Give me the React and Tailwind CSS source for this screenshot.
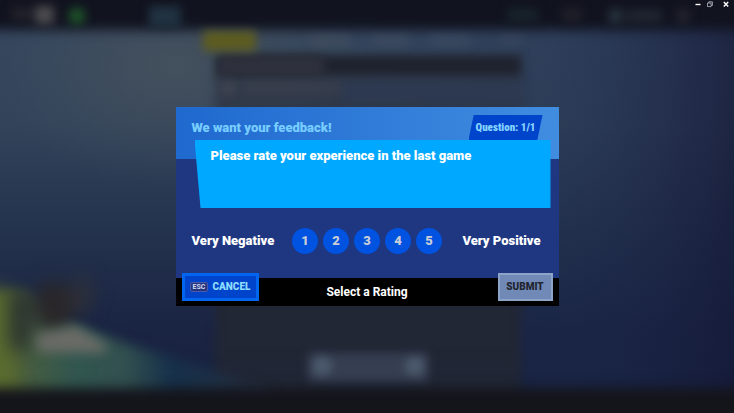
import { useState } from "react";

const RATINGS = [1, 2, 3, 4, 5];

function LobbyScene() {
  return (
    <svg
      aria-hidden="true"
      viewBox="0 0 734 413"
      preserveAspectRatio="none"
      className="absolute inset-0 -z-10 h-full w-full"
    >
      <defs>
        <linearGradient id="sky" x1="0" y1="0" x2="0" y2="1">
          <stop offset="0" stopColor="#35475f" />
          <stop offset="0.3" stopColor="#32435a" />
          <stop offset="0.6" stopColor="#22304b" />
          <stop offset="0.8" stopColor="#1a2443" />
          <stop offset="1" stopColor="#18223f" />
        </linearGradient>
        <linearGradient id="night" x1="0" y1="0" x2="1" y2="0">
          <stop offset="0.5" stopColor="#1a2650" stopOpacity="0" />
          <stop offset="0.75" stopColor="#1c2a50" stopOpacity="0.25" />
          <stop offset="1" stopColor="#151838" stopOpacity="0.7" />
        </linearGradient>
        <radialGradient id="glow" cx="0.5" cy="0.5" r="0.5">
          <stop offset="0" stopColor="#46525d" stopOpacity="0.85" />
          <stop offset="1" stopColor="#46525d" stopOpacity="0" />
        </radialGradient>
        <linearGradient id="list" x1="0" y1="0" x2="0" y2="1">
          <stop offset="0" stopColor="#313847" stopOpacity="0.6" />
          <stop offset="0.5" stopColor="#222733" />
          <stop offset="1" stopColor="#212636" />
        </linearGradient>
        <linearGradient id="hill" gradientUnits="userSpaceOnUse" x1="0" y1="0" x2="260" y2="0">
          <stop offset="0" stopColor="#52622f" />
          <stop offset="0.12" stopColor="#455c41" />
          <stop offset="0.28" stopColor="#31564f" />
          <stop offset="0.48" stopColor="#32504f" />
          <stop offset="0.66" stopColor="#16304b" />
          <stop offset="1" stopColor="#252f40" />
        </linearGradient>
        <filter id="haze" x="-60%" y="-60%" width="220%" height="220%" colorInterpolationFilters="sRGB">
          <feGaussianBlur stdDeviation="9" />
        </filter>
        <filter id="soft" x="-60%" y="-60%" width="220%" height="220%" colorInterpolationFilters="sRGB">
          <feGaussianBlur stdDeviation="6" />
        </filter>
        <filter id="edge" x="-60%" y="-100%" width="220%" height="300%" colorInterpolationFilters="sRGB">
          <feGaussianBlur stdDeviation="5" />
        </filter>
      </defs>

      <rect width="734" height="413" fill="url(#sky)" />
      <ellipse cx="175" cy="65" rx="190" ry="120" fill="url(#glow)" />
      <rect width="734" height="413" fill="url(#night)" />

      <rect x="215" y="55" width="306" height="345" fill="url(#list)" filter="url(#edge)" />
      <rect x="340" y="80" width="188" height="24" fill="#2c3a53" opacity="0.8" filter="url(#soft)" />
      <rect x="218" y="56" width="303" height="19" fill="#1e222d" filter="url(#edge)" />
      <rect x="218" y="55" width="106" height="22" fill="#2e313d" filter="url(#edge)" />
      <circle cx="228" cy="88" r="6" fill="#454654" filter="url(#edge)" />
      <rect x="246" y="83" width="94" height="10" fill="#393e4c" filter="url(#edge)" />

      <path d="M-10 296 L22 290 L70 322 L130 345 L200 366 L270 392 L270 410 L-10 410 Z" fill="url(#hill)" filter="url(#soft)" />
      <g filter="url(#haze)">
        <path d="M-20 288 L10 290 L16 400 L-20 400 Z" fill="#5a6c2f" />
        <rect x="9" y="290" width="21" height="60" fill="#2a3230" />
        <ellipse cx="54" cy="307" rx="20" ry="26" fill="#2a2729" />
        <ellipse cx="82" cy="295" rx="11" ry="20" fill="#2d303a" />
      </g>
      <path d="M36 334 L76 326 L108 346 L104 353 L38 352 Z" fill="#6a6b66" filter="url(#soft)" />

      <g filter="url(#soft)">
        <rect x="-20" y="-20" width="774" height="50" fill="#11131f" />
        <rect x="-20" y="388" width="774" height="45" fill="#14151b" />
      </g>
      <g filter="url(#edge)">
        <rect x="12" y="8" width="20" height="12" fill="#23232b" />
        <rect x="35" y="6" width="19" height="18" fill="#4c4b4f" />
        <circle cx="77" cy="16" r="9" fill="#1d4f29" />
        <rect x="149" y="6" width="32" height="22" fill="#213241" />
        <rect x="203" y="31" width="53" height="20" fill="#5d5c20" />
        <rect x="310" y="37" width="40" height="8" fill="#414c5d" />
        <rect x="374" y="37" width="34" height="8" fill="#3f4b5e" />
        <rect x="430" y="37" width="40" height="8" fill="#3c4a60" />
        <rect x="500" y="37" width="22" height="8" fill="#39455b" />
        <rect x="508" y="8" width="30" height="14" fill="#18232b" />
        <rect x="562" y="8" width="20" height="14" fill="#1e1f29" />
        <rect x="609" y="9" width="13" height="14" fill="#27343e" />
        <rect x="626" y="9" width="36" height="14" fill="#1f2530" />
        <rect x="677" y="9" width="12" height="15" fill="#22242e" />
      </g>
      <g filter="url(#edge)">
        <rect x="308" y="353" width="120" height="28" fill="#363f51" />
        <circle cx="322" cy="366" r="10" fill="#4c5a6e" />
        <circle cx="415" cy="366" r="10" fill="#4c5a6e" />
      </g>
    </svg>
  );
}

function WindowControls() {
  return (
    <div className="flex h-2 items-center justify-end gap-1.5 pr-[5px] text-white">
      <button type="button" aria-label="Minimize">
        <svg width="6" height="8" viewBox="0 0 6 8" className="block">
          <path d="M0.5 4.5h5" stroke="currentColor" strokeWidth="1.4" />
        </svg>
      </button>
      <button type="button" aria-label="Restore" className="pr-1">
        <svg width="6" height="8" viewBox="0 0 6 8" className="block" fill="none" stroke="#b9bcc4" strokeWidth="0.8">
          <path d="M0.5 3h3.6v3.6H0.5zM1.8 3V1.8h3.6v3.7H4.2" />
        </svg>
      </button>
      <button type="button" aria-label="Close">
        <svg width="6" height="8" viewBox="0 0 6 8" className="block">
          <path d="M0.8 2l4.4 4.6M5.2 2L0.8 6.6" stroke="currentColor" strokeWidth="1.4" />
        </svg>
      </button>
    </div>
  );
}

export default function App() {
  const [rating, setRating] = useState(null);

  return (
    <div className="relative isolate grid min-h-screen grid-rows-[8px_1fr_8px] overflow-hidden bg-[#18223f] font-['Roboto','Open_Sans',sans-serif]">
      <LobbyScene />
      <WindowControls />

      <main className="flex items-center justify-center">
        <form
          className="w-full max-w-[383px]"
          onSubmit={(event) => event.preventDefault()}
        >
          <div className="bg-[#1f3781] bg-[linear-gradient(90deg,#1f69cf,#408de0)] bg-[length:100%_52px] bg-no-repeat pt-2 pr-2 pb-6 pl-4">
            <header className="flex h-[25px] items-center justify-between pr-2">
              <h1 className="text-[13px] leading-4 font-black text-[#78cdff]">We want your feedback!</h1>
              <p className="flex h-full w-[74px] items-center justify-center bg-[#0044cc] font-['Roboto_Condensed','Liberation_Sans_Narrow','Open_Sans_Condensed',sans-serif] text-[11px] leading-4 font-black whitespace-nowrap text-[#84d4ff] [clip-path:polygon(7%_0,100%_0,93%_100%,0_100%)]">
                Question: 1/1
              </p>
            </header>

            <div className="ml-[3px] h-[68px] bg-[#00a8ff] px-4 pt-2 [clip-path:polygon(0_0,100%_0,100%_100%,6px_100%)]">
              <h2 className="text-[13px] leading-4 font-black text-white">
                Please rate your experience in the last game
              </h2>
            </div>

            <fieldset
              aria-label="Rating"
              className="mt-5 grid grid-cols-[1fr_auto_1fr] items-center pr-2 text-[13px] leading-4 font-black text-white"
            >
              <span>Very Negative</span>
              <div className="flex gap-[5px]">
                {RATINGS.map((value) => (
                  <label
                    key={value}
                    className="relative flex size-[26px] cursor-pointer items-center justify-center rounded-full bg-[#0052e0] text-[#c8cdd8] has-checked:bg-[#00a8ff] has-checked:text-white"
                  >
                    <input
                      type="radio"
                      name="rating"
                      value={value}
                      checked={rating === value}
                      onChange={() => setRating(value)}
                      className="absolute inset-0 cursor-pointer appearance-none rounded-full"
                    />
                    {value}
                  </label>
                ))}
              </div>
              <span className="pr-0.5 text-right">Very Positive</span>
            </fieldset>
          </div>

          <footer className="grid h-7 grid-cols-[1fr_auto_1fr] items-center bg-black px-1.5">
            <button
              type="button"
              onClick={() => setRating(null)}
              className="-mt-2.5 flex h-7 w-[77px] items-center justify-center gap-1 border-3 border-[#0066f0] bg-[#0044cc] text-[10px] leading-4 font-black text-[#8fdcff]"
            >
              <kbd className="rounded-xs border border-[#4a5aa6] bg-[#25357f] px-0.5 font-['Roboto',sans-serif] text-[7px] leading-2 font-bold text-[#d5dcf0]">
                ESC
              </kbd>
              CANCEL
            </button>
            <p className="text-[12px] leading-4 font-bold text-white">
              {rating ? "Ready to Submit" : "Select a Rating"}
            </p>
            <button
              type="submit"
              disabled={!rating}
              className="-mt-2.5 flex h-7 w-[55px] items-center justify-center justify-self-end border-2 border-[#8ca4c8] bg-[#7189b6] text-[10px] leading-4 font-black text-[#1f2531]"
            >
              SUBMIT
            </button>
          </footer>
        </form>
      </main>
    </div>
  );
}
